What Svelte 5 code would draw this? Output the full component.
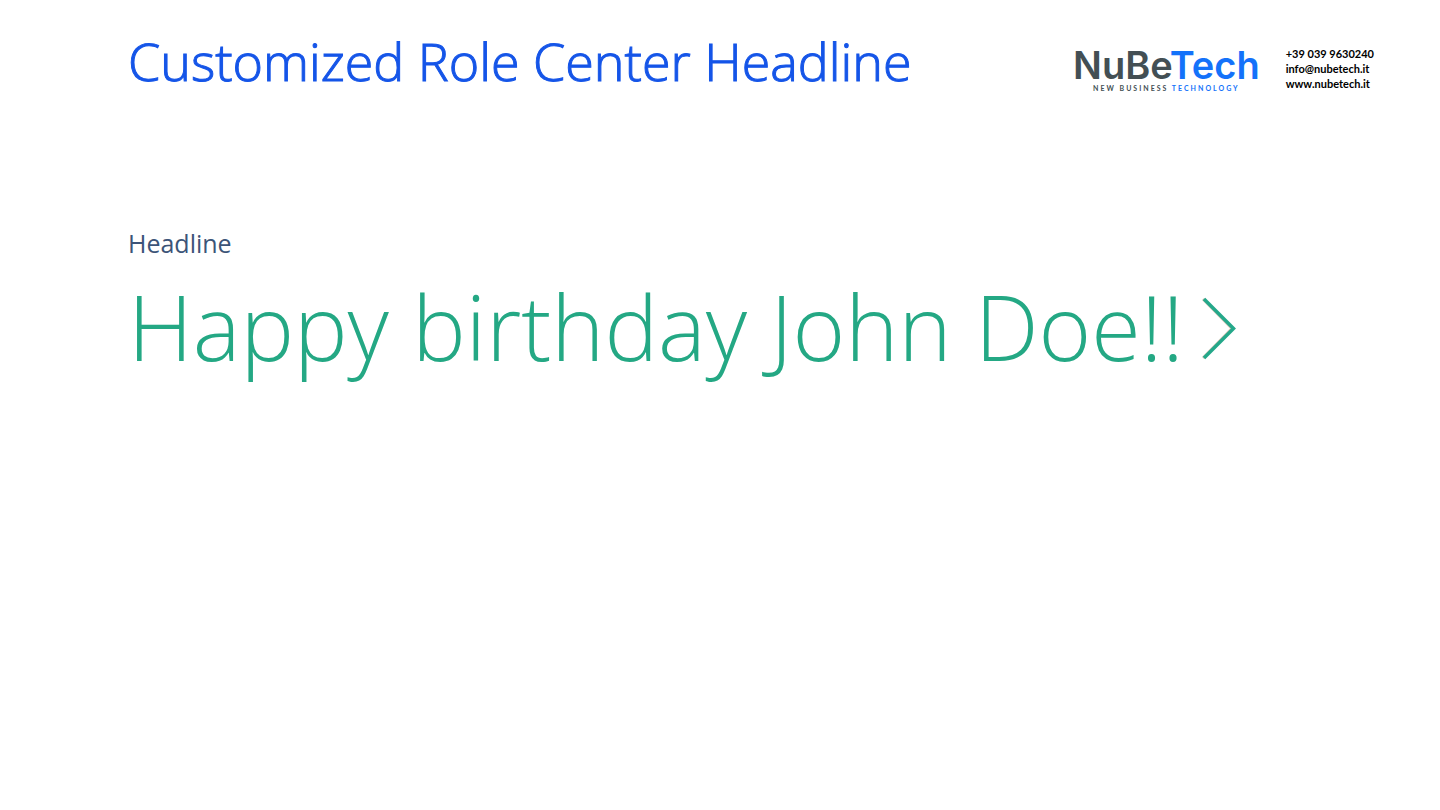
<script lang="ts">
  const contacts = {
    phone: '+39 039 9630240',
    email: 'info@nubetech.it',
    site: 'www.nubetech.it'
  };
</script>

<div class="page">
  <header>
    <h1>Customized Role Center Headline</h1>
    <div class="brand">
      <div class="logo">
        <div class="wordmark">NuBe<span>Tech</span></div>
        <div class="tagline">NEW BUSINESS <span>TECHNOLOGY</span></div>
      </div>
      <address>
        <a href="tel:+390399630240">{contacts.phone}</a>
        <a href="mailto:info@nubetech.it">{contacts.email}</a>
        <a href="https://www.nubetech.it">{contacts.site}</a>
      </address>
    </div>
  </header>
  <main>
    <h2>Headline</h2>
    <a class="greeting" href="#birthday">
      <span>Happy birthday John Doe!!</span>
      <svg viewBox="0 0 36 64" width="36" height="64" aria-hidden="true">
        <path d="M1 3 30 32.500 1 62" fill="none" stroke="#c9a994" stroke-width="3" opacity=".7" />
        <path d="M2 3 31.500 32.500 2 62" fill="none" stroke="#24a88a" stroke-width="3.500" />
      </svg>
    </a>
  </main>
</div>

<style>
  :global(body) {
    background: #fff;
  }
  .page {
    padding: 22px 66px 24px 128px;
    font-family: "Open Sans", "Noto Sans", sans-serif;
  }
  header {
    display: flex;
    justify-content: space-between;
    align-items: flex-start;
  }
  h1 {
    margin: 0;
    font-size: 52px;
    line-height: 78px;
    font-weight: 300;
    color: #1555e8;
    -webkit-text-stroke: 1px #1555e8;
    white-space: nowrap;
  }
  .brand {
    display: flex;
    align-items: flex-start;
    gap: 26px;
    padding-top: 24px;
  }
  .wordmark {
    font-family: Inter, sans-serif;
    font-size: 38px;
    line-height: 38px;
    font-weight: 600;
    color: #434f54;
  }
  .wordmark span,
  .tagline span {
    color: #1472fa;
  }
  .tagline {
    font-family: Lato, sans-serif;
    font-size: 7px;
    line-height: 8px;
    font-weight: 700;
    letter-spacing: 2px;
    text-align: center;
    color: #434f54;
  }
  address {
    display: flex;
    flex-direction: column;
    font-family: Lato, sans-serif;
    font-style: normal;
    font-size: 11px;
    line-height: 15px;
    font-weight: 700;
  }
  address a {
    color: #000;
    text-decoration: none;
    white-space: nowrap;
  }
  main {
    padding-top: 124px;
  }
  h2 {
    margin: 0;
    font-size: 25px;
    line-height: 38px;
    font-weight: 400;
    color: #3c5478;
  }
  .greeting {
    display: flex;
    align-items: center;
    gap: 18px;
    font-size: 90px;
    line-height: 128px;
    font-weight: 300;
    color: #24a884;
    text-decoration: none;
    white-space: nowrap;
  }
  .greeting svg {
    margin-top: 4px;
  }
</style>
